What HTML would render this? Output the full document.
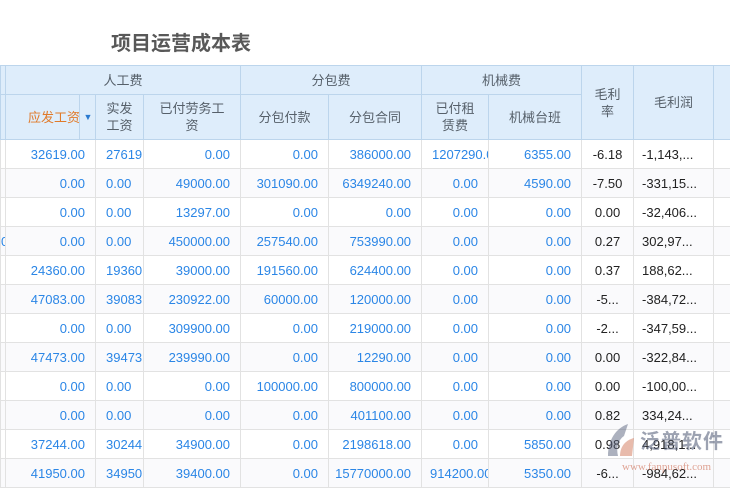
<!DOCTYPE html>
<html><head><meta charset="utf-8"><style>
body{margin:0;width:730px;height:488px;overflow:hidden;background:#fff;font-family:"Liberation Sans","Noto Sans CJK SC",sans-serif;position:relative}
h1{position:absolute;left:111px;top:27px;margin:0;font-size:20px;font-weight:bold;color:#585858}
table{position:absolute;left:0;top:65px;border-collapse:collapse;table-layout:fixed;width:730px}
td,th{overflow:hidden;white-space:nowrap;padding:0 10px 0 2px;font-size:13px}
th{background:#deedfb;border:1px solid #bcd5ec;color:#56606a;font-weight:normal;line-height:17px;white-space:normal;text-align:center;padding:0 4px}
thead tr:first-child th{height:28px}
thead tr:nth-child(2) th{height:44px}
td{height:28px;border:1px solid #e2e2e2;color:#2b86e6;text-align:right;text-overflow:clip}
tbody tr:nth-child(even) td{background:#fafafc}
td.k{color:#222;text-align:center;padding:0}
td.l{color:#222;text-align:left;padding-left:8px}
tr>*:first-child{padding:0}
td.c{text-align:left;padding-left:10px}
.wm{position:absolute;left:640px;top:425px;font-size:20px;color:rgba(90,100,125,.6);font-weight:bold;letter-spacing:1px}
.wm2{position:absolute;left:622px;top:461px;font-size:11px;color:rgba(200,90,60,.55);font-family:"Liberation Serif",serif}
</style></head><body>
<h1>项目运营成本表</h1>
<table>
<colgroup><col style="width:5px"><col style="width:90px"><col style="width:48px"><col style="width:97px"><col style="width:88px"><col style="width:93px"><col style="width:67px"><col style="width:93px"><col style="width:52px"><col style="width:80px"><col style="width:17px"></colgroup>
<thead>
<tr><th></th><th colspan="3">人工费</th><th colspan="2">分包费</th><th colspan="2">机械费</th><th rowspan="2">毛利<br>率</th><th rowspan="2">毛利润</th><th rowspan="2"></th></tr>
<tr><th></th><th style="color:#e07a2a;text-align:left;padding:0 0 0 22px;position:relative;white-space:nowrap">应发工资<span style="position:absolute;left:73px;top:0;bottom:0;border-left:1px solid #bcd5ec;width:16px;color:#2a7ad0;font-size:9px;line-height:44px;text-align:center">▼</span></th><th>实发<br>工资</th><th>已付劳务工<br>资</th><th>分包付款</th><th>分包合同</th><th>已付租<br>赁费</th><th>机械台班</th></tr>
</thead>
<tbody>
<tr><td></td><td>32619.00</td><td class="c">27619</td><td>0.00</td><td>0.00</td><td>386000.00</td><td style="text-align:left;padding-left:10px">1207290.0</td><td>6355.00</td><td class="k">-6.18</td><td class="l">-1,143,...</td><td></td></tr>
<tr><td></td><td>0.00</td><td class="c">0.00</td><td>49000.00</td><td>301090.00</td><td>6349240.00</td><td>0.00</td><td>4590.00</td><td class="k">-7.50</td><td class="l">-331,15...</td><td></td></tr>
<tr><td></td><td>0.00</td><td class="c">0.00</td><td>13297.00</td><td>0.00</td><td>0.00</td><td>0.00</td><td>0.00</td><td class="k">0.00</td><td class="l">-32,406...</td><td></td></tr>
<tr><td style="color:#2b86e6">0</td><td>0.00</td><td class="c">0.00</td><td>450000.00</td><td>257540.00</td><td>753990.00</td><td>0.00</td><td>0.00</td><td class="k">0.27</td><td class="l">302,97...</td><td></td></tr>
<tr><td></td><td>24360.00</td><td class="c">19360</td><td>39000.00</td><td>191560.00</td><td>624400.00</td><td>0.00</td><td>0.00</td><td class="k">0.37</td><td class="l">188,62...</td><td></td></tr>
<tr><td></td><td>47083.00</td><td class="c">39083</td><td>230922.00</td><td>60000.00</td><td>120000.00</td><td>0.00</td><td>0.00</td><td class="k">-5...</td><td class="l">-384,72...</td><td></td></tr>
<tr><td></td><td>0.00</td><td class="c">0.00</td><td>309900.00</td><td>0.00</td><td>219000.00</td><td>0.00</td><td>0.00</td><td class="k">-2...</td><td class="l">-347,59...</td><td></td></tr>
<tr><td></td><td>47473.00</td><td class="c">39473</td><td>239990.00</td><td>0.00</td><td>12290.00</td><td>0.00</td><td>0.00</td><td class="k">0.00</td><td class="l">-322,84...</td><td></td></tr>
<tr><td></td><td>0.00</td><td class="c">0.00</td><td>0.00</td><td>100000.00</td><td>800000.00</td><td>0.00</td><td>0.00</td><td class="k">0.00</td><td class="l">-100,00...</td><td></td></tr>
<tr><td></td><td>0.00</td><td class="c">0.00</td><td>0.00</td><td>0.00</td><td>401100.00</td><td>0.00</td><td>0.00</td><td class="k">0.82</td><td class="l">334,24...</td><td></td></tr>
<tr><td></td><td>37244.00</td><td class="c">30244</td><td>34900.00</td><td>0.00</td><td>2198618.00</td><td>0.00</td><td>5850.00</td><td class="k">0.98</td><td class="l">4,918,1...</td><td></td></tr>
<tr><td></td><td>41950.00</td><td class="c">34950</td><td>39400.00</td><td>0.00</td><td>15770000.00</td><td style="text-align:left;padding-left:8px">914200.00</td><td>5350.00</td><td class="k">-6...</td><td class="l">-984,62...</td><td></td></tr>
</tbody></table>
<svg style="position:absolute;left:602px;top:420px" width="36" height="40"><path d="M6 36 C6 20 14 8 26 4 L22 16 C16 20 14 28 16 36 Z" fill="rgba(90,100,125,.5)"/><path d="M18 36 C18 26 24 20 32 18 L30 36 Z" fill="rgba(210,120,90,.5)"/></svg>
<div class="wm">泛普软件</div>
<div class="wm2">www.fanpusoft.com</div>
</body></html>
